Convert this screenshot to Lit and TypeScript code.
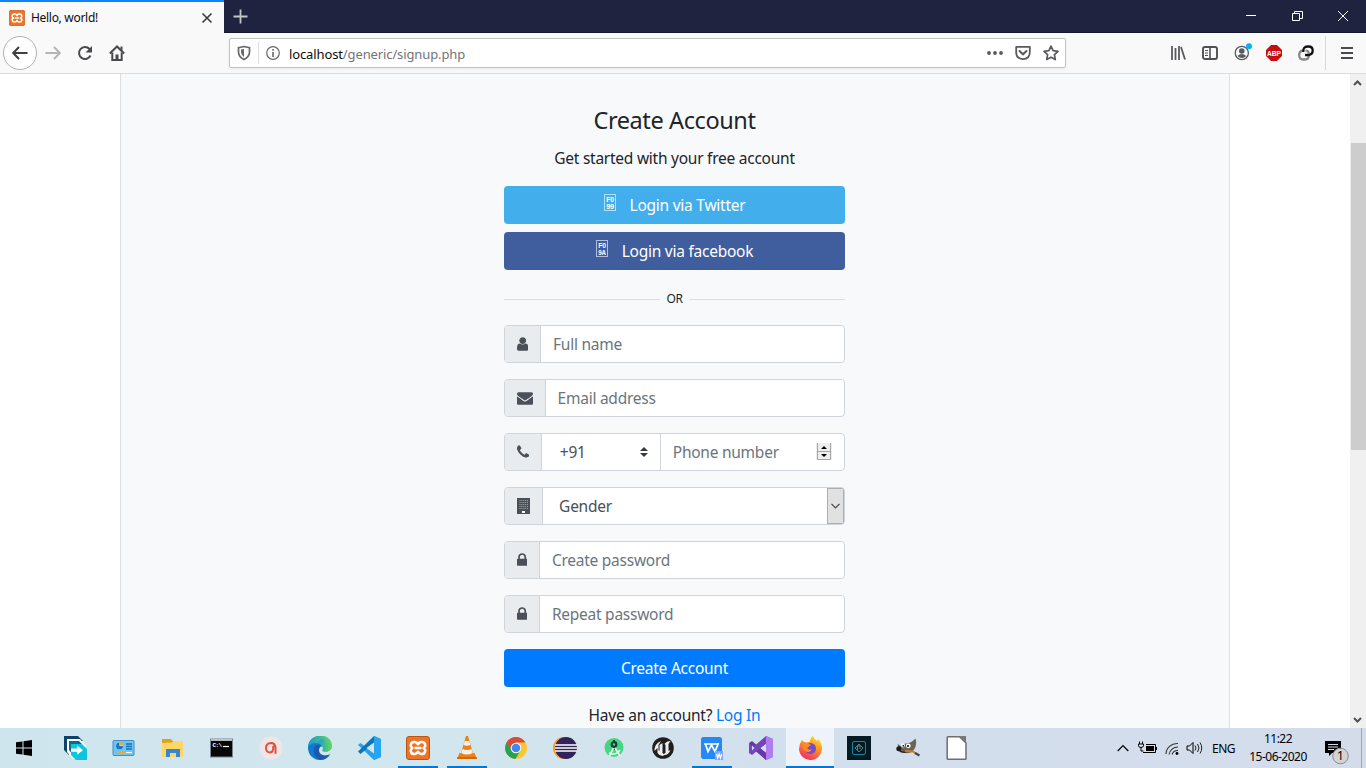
import { LitElement, html, css, svg } from "lit";
import { customElement } from "lit/decorators.js";

const xamppMark = svg`<rect x=".5" y=".5" width="23" height="23" rx="2.5" fill="#ee7322" stroke="#b5561c"/><path d="M9 6c-4.500-.5-5.500 4.500-2.500 6-3 1.500-2 6.500 2.500 6 2-.3 2.500-1.500 3-2.300.5.800 1 2 3 2.300 4.500.5 5.500-4.500 2.500-6 3-1.500 2-6.500-2.500-6-2 .3-2.500 1.500-3 2.300C11.500 7.500 11 6.300 9 6zM8.500 12h7" fill="none" stroke="#fff" stroke-width="2.500" stroke-linejoin="round"/>`;

const fa: Record<string, { box: string; w: number; d: string }> = {
  user: { box: "0 0 1280 1792", w: 11.43, d: "M1280 1399q0 109-62.5 187t-150.5 78h-854q-88 0-150.5-78t-62.5-187q0-85 8.5-160.5t31.5-152 58.5-131 94-89 134.5-34.5q131 128 313 128t313-128q76 0 134.5 34.5t94 89 58.5 131 31.5 152 8.5 160.5zm-256-887q0 159-112.5 271.5t-271.5 112.5-271.5-112.5-112.5-271.5 112.5-271.5 271.5-112.5 271.5 112.5 112.5 271.5z" },
  mail: { box: "0 0 1792 1792", w: 16, d: "M1792 710v794q0 66-47 113t-113 47h-1472q-66 0-113-47t-47-113v-794q44 49 101 87 362 246 497 345 57 42 92.5 65.5t94.5 48 110 24.5h2q51 0 110-24.5t94.5-48 92.5-65.5q170-123 498-345 57-39 100-87zm0-294q0 79-49 151t-122 123q-376 261-468 325-10 7-42.5 31t-54 38.5-52 32.5-57.5 27-50 9h-2q-23 0-50-9t-57.5-27-52-32.5-54-38.5-42.5-31q-91-64-262-182.5t-205-142.5q-62-42-117-115.5t-55-136.5q0-78 41.5-130t118.5-52h1472q65 0 112.5 47t47.5 113z" },
  phone: { box: "192 0 1408 1792", w: 12.2, d: "M1600 1240q0 27-10 70.5t-21 68.5q-21 50-122 106-94 51-186 51-27 0-53-3.5t-57.5-12.5-47-14.5-55.5-20.5-49-18q-98-35-175-83-127-79-264-216t-216-264q-48-77-83-175-3-9-18-49t-20.5-55.5-14.5-47-12.5-57.5-3.5-53q0-92 51-186 56-101 106-122 25-11 68.5-21t70.5-10q14 0 21 3 18 6 53 76 11 19 30 54t35 63.5 31 53.5q3 4 17.5 25t21.5 35.5 7 28.5q0 20-28.5 50t-62 55-62 53-28.5 46q0 9 5 22.5t8.5 20.5 14 24 11.5 19q76 137 174 235t235 174q2 1 19 11.5t24 14 20.5 8.5 22.5 5q18 0 46-28.5t53-62 55-62 50-28.500q14 0 28.5 7t35.5 21.5 25 17.5q25 15 53.5 31t63.5 35 54 30q70 35 76 53 3 7 3 21z" },
  lock: { box: "320 0 1152 1792", w: 10.29, d: "M640 768h512v-192q0-106-75-181t-181-75-181 75-75 181v192zm832 96v576q0 40-28 68t-68 28h-960q-40 0-68-28t-28-68v-576q0-40 28-68t68-28h32v-192q0-184 132-316t316-132 316 132 132 316v192h32q40 0 68 28t28 68z" },
};

const faIcon = (n: string) =>
  html`<svg width=${fa[n].w} height="16" viewBox=${fa[n].box}><path fill="#495057" d=${fa[n].d} /></svg>`;

const building = html`<svg width="13" height="18" viewBox="0 0 13 18"><path fill="#495057" d="M0 1h13v16H0z"/><path d="M2.500 3.500h8.500M2.500 5.500h8.500M2.500 7.500h8.500M2.500 9.500h8.500M2.500 11.500h8.500" stroke="#a3a9af" stroke-dasharray="1 .9"/><path d="M5 14h3v2H5z" fill="#fff"/></svg>`;

const ic = (w: number, h: number, body: unknown, cls = "") =>
  html`<svg class=${cls} width=${w} height=${h} viewBox="0 0 ${w} ${h}" fill="none">${body}</svg>`;

const tofuLine = (y: number, s: string) =>
  svg`<text x="2.300" y=${y} textLength="7.600" lengthAdjust="spacingAndGlyphs" font-size="7.800" font-weight="700" font-family="Liberation Sans, sans-serif" fill="#fff">${s}</text>`;

const tofu = (a: string, b: string) =>
  ic(12, 17, svg`<rect x=".5" y=".5" width="11" height="16" stroke="#fff" stroke-opacity=".6"/>${tofuLine(8, a)}${tofuLine(14.8, b)}`, "tofu");

const taskIcons: { state?: string; art: unknown }[] = [
  { art: svg`<path d="M1 0h14l5 5H6v14L1 14z" fill="#0b4468"/><path d="M4 3h13l6 7v13H10l-6-7z" fill="#fff"/><path d="M6 5h10l3 3H9v10l-3-4z" fill="#126b84"/><path d="M8 8h11l5 5v11H13l-5-5z" fill="#0cc5df"/><path d="M8 12.500h6V9.500l6 4.700-6 4.600v-3H8z" fill="#fff"/>` },
  { art: svg`<rect x="1" y="4.500" width="21" height="15" rx="1" fill="#6fc4f3" stroke="#3f8fc4"/><circle cx="7.500" cy="10" r="3.500" fill="#fff"/><path d="M7.500 10V6.500A3.500 3.500 0 1 0 11 10z" fill="#1378cc"/><path d="M8 9.500V6a3.500 3.500 0 0 1 3.500 3.500z" fill="#f6a623"/><path d="M14 8h6M14 10.500h6M14 13h6" stroke="#166fb4" stroke-width="1.300"/><path d="M5 16.500h9" stroke="#f6a623" stroke-width="1.400"/><path d="M14 16.500h6" stroke="#fff"/>` },
  { art: svg`<path d="M1 3h9l1.500 2H22v16H1z" fill="#e0a21b"/><path d="M1 7l10-.500L12.500 5H22v16H1z" fill="#ffd766"/><path d="M5 21v-8h14v8h-4v-4H9v4z" fill="#3588cf"/>` },
  { art: svg`<rect x=".5" y="3" width="22" height="18" fill="#080808" stroke="#7d858c"/><path d="M1 4h21" stroke="#e2e5e8" stroke-width="1.600"/><text x="2.500" y="11" fill="#fff" font-size="6" font-weight="700" letter-spacing="-.6" font-family="Liberation Mono, monospace">C:\\</text><path d="M13 10.500h6" stroke="#fff" stroke-width="1.200"/>` },
  { art: svg`<circle cx="12" cy="12" r="11.700" fill="#efe5e4"/><path d="M16.500 11.500Q16 7 12 7q-5 .3-5 5 .2 4.500 4 4.500 3.500-.2 3.300-6M16.500 11v6" stroke="#df5141" stroke-width="2" stroke-linecap="round"/>` },
  { art: svg`<defs><linearGradient id="eg" x1="0" x2="1"><stop stop-color="#1998d7"/><stop offset="1" stop-color="#66d957"/></linearGradient></defs><circle cx="12" cy="12" r="12" fill="#1479ca"/><path d="M0 11C1-4 24-4 24 10c0 5-6 7-10 5 2-3 0-8-6-8-4 0-7 2-8 4z" fill="url(#eg)"/><path d="M24 10c0 5-6 7-10 5 1-1 1.500-2.500.5-4.500-4-1-7.500 6-.5 9 4 1.500 7 0 8.500-1.500l2 0z" fill="#d3e6ee"/><path d="M24 9c0 5-5 7-9.500 5.300 1.500-3-.5-7.300-5.500-7.300L14 2z" fill="url(#eg)"/><path d="M8 9c-4 4-3 12 4 15 5 0 8-3 10-6-5 3-11 1-11-4 0-2 1-3 2-4-2-1-4-1-5-1z" fill="#1c5aae"/>` },
  { art: svg`<path d="M17 0l7 3v18l-7 3L1 9l2.500-2L17 17z" fill="#29a0ea"/><path d="M17 0l1 6L3.500 18 1 15.500z" fill="#0877bd"/><path d="M17 0l7 3v18l-7 3z" fill="#28a5ee"/><path d="M9.500 12L17 6.500v11z" fill="#d2e6ee"/>` },
  { state: "run", art: xamppMark },
  { state: "run", art: svg`<path d="M4.500 17h15l2.500 6H2z" fill="#f08013"/><path d="M11 0h2l5.500 19q-6.500 4-13 0z" fill="#ee8115"/><path d="M9.800 5h4.400l1.200 4q-3.500 1.500-6.800 0zM7.500 13q4.500 2 9 0l1.200 4q-5.700 3-11.400 0z" fill="#f1f1f1"/><path d="M2.500 21h19l.5 2H2z" fill="#d86406"/>` },
  { art: svg`<circle cx="12" cy="12" r="11" fill="#f7c832"/><path d="M2.500 6.500A11 11 0 0 0 11.500 23l5-8.500L12 12z" fill="#2aa152"/><path d="M2.500 6.500L8 14l4-7.500h9.500A11 11 0 0 0 2.500 6.500z" fill="#dc4a3d"/><circle cx="12" cy="12" r="5.300" fill="#fff"/><circle cx="12" cy="12" r="4.300" fill="#4786ef"/>` },
  { art: svg`<circle cx="11" cy="12" r="11" fill="#f79a28"/><circle cx="13" cy="12" r="11" fill="#302359"/><path d="M2 9h22M2 12h22M2 15h22" stroke="#fff" stroke-width="1.700"/>` },
  { art: svg`<circle cx="12" cy="11.500" r="9.500" fill="#45d681"/><path d="M12 4v3m0 3v4" stroke="#143e3c" stroke-width="2"/><circle cx="12" cy="8.500" r="2.300" stroke="#143e3c" stroke-width="2.200"/><path d="M11.500 12L7.500 20M13 12l5 8M7 17q7 3 11-3" stroke="#e9faf2" stroke-width="1.700"/>` },
  { art: svg`<circle cx="12" cy="12" r="10.800" fill="#211e1e"/><path d="M10 5Q3 8 3.500 15l3-3v5q2 3 5 3l2-1q4 0 6-5l-2 1V8l2-3q-4 0-6 3l1 1v8l-2 1-1-1V7l-3 2v6l-1-1V9z" fill="#eee"/>` },
  { state: "run", art: svg`<rect x="1" y="1" width="21" height="22" rx="2.500" fill="#2589f5"/><path d="M4 8h12M5.500 8l2.500 7.500L11.500 9l3.500 6.500L18.500 7M15 8h3" stroke="#fff" stroke-width="1.700"/><path d="M15 15h8v9h-8z" fill="#79aaff"/><path d="M16.500 18l1.200 4 1.400-4 1.400 4 1.200-4" stroke="#fff" stroke-width="1.200"/>` },
  { art: svg`<path d="M17 0l7 3v18l-7 3L0 8l3-2 14 11z" fill="#8451cc"/><path d="M0 7l3-2 14 12v7L3 12z" fill="#6a35a8"/><path d="M17 0v8L3 19l-3-2V7l3 5z" fill="#7445b8"/><path d="M17 0l7 3v18l-7 3z" fill="#b07df1"/><path d="M17 8v8l-5-4z" fill="#d3e1ee"/><path d="M3 9.500v5L5.500 12z" fill="#d3e1ee"/>` },
  { state: "active", art: svg`<defs><linearGradient id="ff" x1=".8" y1="0" x2=".3" y2="1"><stop stop-color="#ffe32f"/><stop offset=".45" stop-color="#ff9021"/><stop offset="1" stop-color="#f12a68"/></linearGradient></defs><path d="M4 4l2 2 3 .5 3-1Q12 2 15 0q1 3 4 5l1-2q4 4 4 9A11.500 11.500 0 0 1 1 13q0-5 3-9z" fill="url(#ff)"/><circle cx="12.500" cy="12.500" r="5.500" fill="#754bd1"/><path d="M5 8q4-2 8 1l-4 3q2 3 5 1-2 5-7 2-3-3-2-7z" fill="#ff8a25"/>` },
  { art: svg`<path d="M0 0h24v24H0z" fill="#051b24"/><rect x="5.500" y="5.500" width="13" height="13" rx="1.500" stroke="#1686a0"/><path d="M12 8l4 4-4 4-4-4zM10.500 14v-4H13v3" stroke="#55848f"/>` },
  { art: svg`<path d="M1.500 8l3.500 2q2-3 6-2.500 4-.5 8.500-5Q21 7 19 12q-3 6-9 5Q2 16 1.500 8z" fill="#6b6353"/><path d="M2 13q3 4 8 3" stroke="#2c2822" stroke-width="1.500"/><circle cx="7" cy="9.500" r="1.900" fill="#fff"/><circle cx="12.300" cy="9.800" r="2.400" fill="#fff"/><circle cx="7.300" cy="9.800" r=".9" fill="#111"/><circle cx="12" cy="10" r="1.100" fill="#111"/><circle cx="2.800" cy="12.800" r="2.500" fill="#1b1b1b"/><path d="M9 15l8 .500 3 2" stroke="#c77a30" stroke-width="1.800"/><path d="M19 17l4.500 2.500" stroke="#444" stroke-width="2.200"/>` },
  { art: svg`<path d="M3.500.7h11L21 7v15.800q0 .5-.5.500H3q-.8 0-.8-.8V1.500q0-.8 1.300-.8z" fill="#fff" stroke="#6f6f6f" stroke-width="1.500"/><path d="M14.500 0H21v6.500z" fill="#777"/>` },
];

@customElement("app-root")
export class AppRoot extends LitElement {
  static styles = css`
    :host { display: flex; flex-direction: column; width: 1366px; height: 768px; overflow: hidden; font-family: "Noto Sans", "Open Sans", sans-serif; color: #212529; background: #fff; }
    * { box-sizing: border-box; }
    svg { display: block; flex: none; }
    .tabs { height: 33px; background: #202340; display: flex; flex: none; border-bottom: 1px solid #15172e; }
    .tab { width: 224px; height: 33px; background: #f9f9fa; border-top: 2px solid #0a84ff; display: flex; align-items: center; padding: 0 11px 0 9px; font-size: 12px; letter-spacing: -.3px; color: #0c0c0d; }
    .tab span { margin-left: 6px; flex: 1; }
    .plus { margin: 9px 0 0 9px; }
    .win { margin: 9px 17px 0 auto; display: flex; gap: 35px; }
    .tools { height: 41px; flex: none; background: #f9f9fa; border-bottom: 1px solid #dcdcdd; display: flex; align-items: center; }
    .nav { width: 229px; display: flex; align-items: center; padding-left: 3px; }
    .back { width: 34px; height: 34px; border: 1px solid #b1b1b3; border-radius: 50%; background: #fff; display: grid; place-items: center; margin-right: 8px; }
    .nav .gap { margin-left: 16px; }
    .url { width: 837px; height: 30px; border: 1px solid #c2c2c3; border-radius: 2px; background: #fff; box-shadow: 0 1px 3px #0001; display: flex; align-items: center; padding: 0 6px 0 7px; }
    .sep { width: 1px; height: 22px; background: #dedee0; margin: 0 7px; }
    .addr { flex: 1; font-size: 13px; letter-spacing: -.12px; line-height: 18px; padding-top: 1px; color: #737376; margin-left: 9px; }
    .addr b { font-weight: 400; color: #0c0c0d; }
    .url-end { display: flex; gap: 12px; align-items: center; }
    .ext { margin-left: auto; display: flex; align-items: center; gap: 16px; padding-right: 11px; }
    .ext .acct { margin-right: -2px; }
    .vr { width: 1px; height: 34px; background: #d7d7db; margin: 0 -3px 0 -5px; }
    .view { flex: 1; min-height: 0; display: flex; }
    .page { flex: 1; display: flex; justify-content: center; overflow: hidden; }
    .card { width: 1110px; height: 654px; background: #f8f9fb; border: solid #dfdfdf; border-width: 0 1px; padding-top: 31px; display: flex; justify-content: center; }
    .form { width: 341px; display: flex; flex-direction: column; font-size: 15.500px; letter-spacing: -.25px; line-height: 24px; margin-right: 1px; }
    h4 { margin: 0 0 12px; font-size: 23.500px; letter-spacing: -.4px; line-height: 30px; font-weight: 400; text-align: center; }
    .lead { text-align: center; margin-bottom: 15px; height: 24px; line-height: 23px; }
    .btn { height: 38px; border-radius: 4px; color: #fff; display: flex; justify-content: center; align-items: center; flex: none; }
    .tw { background: #42aeec; margin-bottom: 8px; }
    .fb { background: #405d9d; }
    .tofu { margin: -6px 14px 0 0; }
    .or { display: flex; align-items: center; gap: 7px; font-size: 12px; letter-spacing: -.5px; height: 24px; margin: 17px 0 14px; }
    .or i { flex: 1; height: 1px; background: #dcdee0; }
    .group { display: flex; height: 38px; margin-bottom: 16px; border: 1px solid #ced4da; border-radius: 4px; background: #fff; overflow: hidden; flex: none; }
    .pre { background: #e9ecef; border-right: 1px solid #ced4da; padding: 0 12px 0 11.600px; display: flex; align-items: center; flex: none; }
    .ph { flex: 1; padding-left: 12px; line-height: 36px; color: #6c757d; }
    .sel { color: #495057; padding-left: 16.500px; }
    .code { flex: none; width: 119px; border-right: 1px solid #ced4da; display: flex; align-items: center; justify-content: space-between; line-height: 36px; padding: 0 12px 0 18px; color: #495057; }
    .num { display: flex; align-items: center; justify-content: space-between; padding-right: 12px; }
    .drop { width: 17px; border: 1px solid #adadad; background: #e1e1e1; display: grid; place-items: center; }
    .create { background: #007bff; margin-bottom: 17px; }
    .foot { text-align: center; height: 24px; line-height: 23px; }
    .foot a { color: #007bff; }
    .scroll { width: 16px; background: #f0f0f0; display: flex; flex-direction: column; align-items: center; }
    .thumb { width: 15px; height: 307px; margin: 56px 0 auto; background: #cdcdcd; }
    .scroll .up { margin: 5px 1px 0 0; }
    .scroll .dn { margin: 0 1px 4px 0; }
    .task { height: 40px; flex: none; background: linear-gradient(90deg, #cfe5ed, #d2e6ee 35%, #d2dfed 60%, #d4dcea); display: flex; }
    .start { width: 50px; padding: 12px 0 0 16px; }
    .apps { display: grid; grid-template-columns: repeat(19, 49px); }
    .app { display: flex; flex-direction: column; align-items: center; padding-top: 8px; width: 48px; height: 40px; margin-left: 1px; }
    .app i { width: 40px; height: 2px; background: #0078d7; margin-top: 6px; }
    .app.active { background: #edf3f9; }
    .app.active i { width: 48px; }
    .tray { margin-left: auto; display: flex; align-items: center; font-size: 12px; color: #000; }
    .tray > * { flex: none; }
    .lang { width: 24px; margin-left: 9px; letter-spacing: -.5px; }
    .clock { width: 60px; margin: 0 17px 0 12px; text-align: center; line-height: 18px; letter-spacing: -.5px; }
    .note { margin-top: 7px; }
    .edge { width: 1px; height: 40px; background: #9da9b8; margin: 0 4px 0 11px; }
  `;

  private field(icon: unknown, label: string) {
    return html`<div class="group"><div class="pre">${icon}</div><div class="ph">${label}</div></div>`;
  }

  render() {
    return html`
      <div class="tabs">
        <div class="tab">
          <svg width="16" height="16" viewBox="0 0 24 24" fill="none">${xamppMark}</svg>
          <span>Hello, world!</span>
          ${ic(12, 12, svg`<path d="M1.500 1.500l9 9M10.500 1.500l-9 9" stroke="#3b3b3f" stroke-width="1.600"/>`)}
        </div>
        ${ic(15, 15, svg`<path d="M7.500 .5v14M.5 7.500h14" stroke="#c4c4cd" stroke-width="1.800"/>`, "plus")}
        <div class="win">
          ${ic(11, 14, svg`<path d="M0 6.500h10" stroke="#fff"/>`)}
          ${ic(11, 14, svg`<path d="M.5 4.500h7v7h-7zM2.500 4.500v-2h8v7h-3" stroke="#fff"/>`)}
          ${ic(11, 14, svg`<path d="M0 2l10 10M10 2L0 12" stroke="#fff"/>`)}
        </div>
      </div>
      <div class="tools">
        <div class="nav">
          <div class="back">${ic(16, 16, svg`<path d="M15.500 8H1.500M7 2L1.200 8 7 14" stroke="#3f3f43" stroke-width="2"/>`)}</div>
          ${ic(16, 16, svg`<path d="M.5 8h14M9 2l5.800 6L9 14" stroke="#b5b5b8" stroke-width="2"/>`)}
          ${ic(16, 16, svg`<path d="M13.500 10.500A6 6 0 1 1 12.500 4l1.500 2" stroke="#4a4a4e" stroke-width="2"/><path d="M15 1v6.500H8.500z" fill="#4a4a4e"/>`, "gap")}
          ${ic(16, 16, svg`<path d="M.8 8.500L8 1.500l7.200 7" stroke="#4a4a4e" stroke-width="2"/><path d="M3.300 7.500V15h9.400V7.500" stroke="#4a4a4e" stroke-width="2"/><path d="M6.500 15V9.500h3V15z" fill="#4a4a4e"/><path d="M11.500 1.500h2v4h-2z" fill="#4a4a4e"/>`, "gap")}
        </div>
        <div class="url">
          ${ic(14, 16, svg`<path d="M7 1.500l5.500 1.200v4.500Q12.200 12 7 14.500 1.800 12 1.500 7.200V2.700z" stroke="#68686b" stroke-width="1.700"/><path d="M7 4l-3 .6v3Q4.500 10.500 7 12z" fill="#68686b"/>`)}
          <div class="sep"></div>
          ${ic(14, 14, svg`<circle cx="7" cy="7" r="6.300" stroke="#68686b" stroke-width="1.200"/><path d="M7 6v5M7 3v1.800" stroke="#68686b" stroke-width="1.600"/>`)}
          <div class="addr"><b>localhost</b>/generic/signup.php</div>
          <div class="url-end">
            ${ic(16, 16, svg`<circle cx="2" cy="8" r="1.900" fill="#5a5a5e"/><circle cx="8" cy="8" r="1.900" fill="#5a5a5e"/><circle cx="14" cy="8" r="1.900" fill="#5a5a5e"/>`)}
            ${ic(16, 16, svg`<path d="M1.200 1.900h13.600v5.300q0 6.500-6.800 6.900-6.800-.4-6.800-6.900z" stroke="#5a5a5e" stroke-width="1.800" stroke-linejoin="round"/><path d="M4.500 6L8 9.300 11.500 6" stroke="#5a5a5e" stroke-width="2" stroke-linecap="round"/>`)}
            ${ic(16, 16, svg`<path d="M8 1.200l2.100 4.500 4.900.6-3.600 3.400.9 4.900L8 12.200l-4.300 2.400.9-4.900L1 6.300l4.900-.6z" stroke="#5a5a5e" stroke-width="1.700" stroke-linejoin="round"/>`)}
          </div>
        </div>
        <div class="ext">
          ${ic(16, 16, svg`<path d="M2 1v14M5.500 3v12M9 1v14M11 2l4 12.500" stroke="#5a5a5e" stroke-width="1.800"/>`)}
          ${ic(16, 16, svg`<rect x="1" y="2" width="14" height="12" rx="2" stroke="#4f4f53" stroke-width="1.900"/><path d="M8 2v12" stroke="#4f4f53" stroke-width="1.600"/><path d="M3 5.500h3M3 8h3M3 10.500h3" stroke="#4f4f53"/>`)}
          ${ic(18, 20, svg`<circle cx="7.800" cy="10" r="6.600" stroke="#5a5a5e" stroke-width="1.300"/><circle cx="7.800" cy="8" r="2.800" fill="#5a5a5e"/><path d="M3.300 13q4.500-4 9 0-4 4-9 0z" fill="#5a5a5e"/><circle cx="15" cy="3.200" r="3" fill="#00b3f4"/>`, "acct")}
          ${ic(16, 16, svg`<path d="M5 0h6l5 5v6l-5 5H5l-5-5V5z" fill="#c70d12"/><text x="8" y="10.800" text-anchor="middle" textLength="14" lengthAdjust="spacingAndGlyphs" font-size="7.800" font-weight="700" font-family="Liberation Sans, sans-serif" fill="#fff">ABP</text>`)}
          ${ic(16, 16, svg`<path d="M5 5.500q-3.800.5-3.800 4.500 0 4.500 4 4.500h1.500q4 0 4-3.500" stroke="#88888b" stroke-width="2.300"/><path d="M11 8.500Q10.500 5.500 7.500 5.500" stroke="#88888b" stroke-width="2.200"/><path d="M5.300 7Q5 1.500 9.500 1.500h1q4.200 0 4.200 4t-4.200 4.500H7" stroke="#111" stroke-width="2.300"/>`)}
          <div class="vr"></div>
          ${ic(16, 16, svg`<path d="M2 3h12M2 8h12M2 13h12" stroke="#4a4a4e" stroke-width="1.800"/>`)}
        </div>
      </div>
      <div class="view">
        <div class="page"><div class="card"><div class="form">
          <h4>Create Account</h4>
          <div class="lead">Get started with your free account</div>
          <div class="btn tw">${tofu("F0", "99")}Login via Twitter</div>
          <div class="btn fb">${tofu("F0", "9A")}Login via facebook</div>
          <div class="or"><i></i>OR<i></i></div>
          ${this.field(faIcon("user"), "Full name")}
          ${this.field(faIcon("mail"), "Email address")}
          <div class="group">
            <div class="pre">${faIcon("phone")}</div>
            <div class="code">+91${ic(8, 10, svg`<path d="M0 4l4-4 4 4zM0 6l4 4 4-4z" fill="#343a40"/>`)}</div>
            <div class="ph num">Phone number${ic(16, 18, svg`<path d="M0 0h16v17H0z" fill="#eee"/><path d="M1.500 0v16.500h13V0M1.500 8.500h13" stroke="#a5a5a5"/><path d="M5 6l3-3 3 3zM5 11h6l-3 3z" fill="#000"/>`)}</div>
          </div>
          <div class="group">
            <div class="pre">${building}</div>
            <div class="ph sel">Gender</div>
            <div class="drop">${ic(9, 6, svg`<path d="M.5.800l4 4 4-4" stroke="#444" stroke-width="1.200"/>`)}</div>
          </div>
          ${this.field(faIcon("lock"), "Create password")}
          ${this.field(faIcon("lock"), "Repeat password")}
          <div class="btn create">Create Account</div>
          <div class="foot">Have an account? <a>Log In</a></div>
        </div></div></div>
        <div class="scroll">
          ${ic(9, 8, svg`<path d="M1 6l3.500-3.500L8 6" stroke="#505050" stroke-width="2"/>`, "up")}
          <div class="thumb"></div>
          ${ic(9, 8, svg`<path d="M1 2l3.500 3.500L8 2" stroke="#505050" stroke-width="2"/>`, "dn")}
        </div>
      </div>
      <div class="task">
        <div class="start">${ic(16, 16, svg`<path d="M0 2.300L6.500 1.400v6H0zM7.500 1.200L16 0v7.400H7.500zM0 8.400h6.500v6.200L0 13.700zM7.500 8.400H16V16l-8.500-1.200z" fill="#000"/>`)}</div>
        <div class="apps">
          ${taskIcons.map((t) => html`<div class="app ${t.state ?? ""}">${ic(24, 24, t.art)}${t.state ? html`<i></i>` : ""}</div>`)}
        </div>
        <div class="tray">
          ${ic(12, 8, svg`<path d="M.7 7L6 1.500 11.300 7" stroke="#000" stroke-width="1.200"/>`)}
          <svg width="74" height="18" viewBox="0 0 74 18" fill="none">
            <path d="M17 7h8v5h-8z" fill="#000"/><path d="M14 13.500h12.500v-8H17" stroke="#000"/><path d="M27.500 8v3" stroke="#000"/><path d="M9.500 5h5v1.500q0 2-2.500 2t-2.500-2zM10.500 2.500V5M13.500 2.500V5M12 8.500v3.500h2.500" stroke="#000"/>
            <path d="M37 15a11 11 0 0 1 12-10.500M40 15.500a9 9 0 0 1 9-7.500M43 15.500a6 6 0 0 1 6-4" stroke="#333" stroke-width="1.100"/><circle cx="48" cy="14.500" r="1.400" fill="#000"/>
            <path d="M58 7h2.500L64 3.500v11L60.500 11H58z" stroke="#000"/><path d="M66 6.500q2 2.500 0 5M68.500 5q3 4 0 8M71 3.500q3.500 5.500 0 11" stroke="#222"/>
          </svg>
          <div class="lang">ENG</div>
          <div class="clock">11:22<br />15-06-2020</div>
          ${ic(25, 26, svg`<path d="M0 2h16v12H7l-3 3v-3H0z" fill="#000"/><path d="M3 5.500h10M3 8h10M3 10.500h6" stroke="#d4dcea"/><circle cx="15.500" cy="17" r="7.800" fill="#d3d3d3" stroke="#8b8b8b"/><text x="15.500" y="21.200" font-size="12" text-anchor="middle" fill="#000" font-family="Noto Sans, sans-serif">1</text>`, "note")}
          <div class="edge"></div>
        </div>
      </div>`;
  }
}
